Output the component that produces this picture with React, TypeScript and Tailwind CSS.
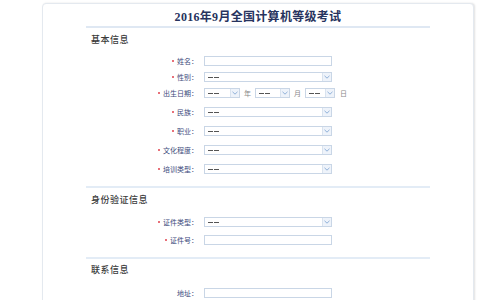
import React from "react";

const cjk = { fontFamily: '"Noto Sans CJK SC", "Noto Sans", sans-serif' };
const serif = { fontFamily: '"Liberation Serif", "Noto Sans CJK SC", serif' };

function Arrow() {
  return (
    <span className="flex h-[8px] w-[9px] items-center justify-center bg-[#eef3fa] border-l border-[#d9e3ef]">
      <svg width="6" height="4" viewBox="0 0 6 4">
        <path d="M0.5 0.8 L3 3.2 L5.5 0.8" fill="none" stroke="#8fb0d8" strokeWidth="1" />
      </svg>
    </span>
  );
}

function Select({ w }: { w: string }) {
  return (
    <div className={`${w} flex h-[10px] items-center justify-between border border-[#c9d6e6] bg-white pl-[3px]`}>
      <span className="flex items-center gap-[1px]">
        <span className="h-[1px] w-[5px] bg-[#555]" />
        <span className="h-[1px] w-[5px] bg-[#555]" />
      </span>
      <Arrow />
    </div>
  );
}

function Input() {
  return <div className="h-[10px] w-[128px] border border-[#c9d6e6] bg-white" />;
}

function Label({ text, req = true }: { text: string; req?: boolean }) {
  return (
    <div className="flex w-[113px] items-center justify-end pr-[1px]">
      {req && <span className="mr-[3px] h-[2px] w-[2px] rounded-full bg-[#e0414c]" />}
      <span className="text-[7px] leading-[10px] text-[#3c4b7c]" style={cjk}>{text}：</span>
    </div>
  );
}

function Row({ label, req = true, mt, children }: { label: string; req?: boolean; mt: string; children: React.ReactNode }) {
  return (
    <div className={`${mt} flex h-[10px] items-center gap-[5px]`}>
      <Label text={label} req={req} />
      {children}
    </div>
  );
}

function Section({ title, mt }: { title: string; mt: string }) {
  return (
    <div className={`${mt} pl-[5px] text-[9px] font-medium leading-[12px] tracking-[0.5px] text-[#3a3a3a]`} style={cjk}>
      {title}
    </div>
  );
}

function Divider({ mt }: { mt: string }) {
  return <div className={`${mt} h-[2px] bg-[#e3ecf6]`} />;
}

export default function App() {
  return (
    <div className="h-[300px] w-[487px] overflow-hidden bg-white">
      <div className="ml-[42px] mt-[3px] h-[310px] w-[432px] rounded-t-[4px] border border-[#e4e9ef] bg-white pl-[43px] pr-[43px] pt-[6px] shadow-[1px_0_2px_rgba(0,0,0,0.12)]">
        <div className="h-[14px] text-center text-[12px] font-bold leading-[14px] tracking-[0.3px] text-[#27335e]" style={serif}>
          2016年9月全国计算机等级考试
        </div>
        <div className="mt-[2px] h-[2px] bg-[#dfe8f3]" />
        <Section title="基本信息" mt="mt-[6px]" />
        <Row label="姓名" mt="mt-[10px]"><Input /></Row>
        <Row label="性别" mt="mt-[6px]"><Select w="w-[128px]" /></Row>
        <Row label="出生日期" mt="mt-[6px]">
          <div className="flex items-center">
            <Select w="w-[36px]" />
            <span className="mx-[4px] text-[7px] text-[#888]" style={cjk}>年</span>
            <Select w="w-[35px]" />
            <span className="mx-[4px] text-[7px] text-[#888]" style={cjk}>月</span>
            <Select w="w-[30px]" />
            <span className="ml-[5px] text-[7px] text-[#888]" style={cjk}>日</span>
          </div>
        </Row>
        <Row label="民族" mt="mt-[9px]"><Select w="w-[128px]" /></Row>
        <Row label="职业" mt="mt-[9px]"><Select w="w-[128px]" /></Row>
        <Row label="文化程度" mt="mt-[9px]"><Select w="w-[128px]" /></Row>
        <Row label="培训类型" mt="mt-[9px]"><Select w="w-[128px]" /></Row>
        <Divider mt="mt-[12px]" />
        <Section title="身份验证信息" mt="mt-[6px]" />
        <Row label="证件类型" mt="mt-[11px]"><Select w="w-[128px]" /></Row>
        <Row label="证件号" mt="mt-[8px]"><Input /></Row>
        <Divider mt="mt-[12px]" />
        <Section title="联系信息" mt="mt-[5px]" />
        <Row label="地址" req={false} mt="mt-[12px]"><Input /></Row>
      </div>
    </div>
  );
}
